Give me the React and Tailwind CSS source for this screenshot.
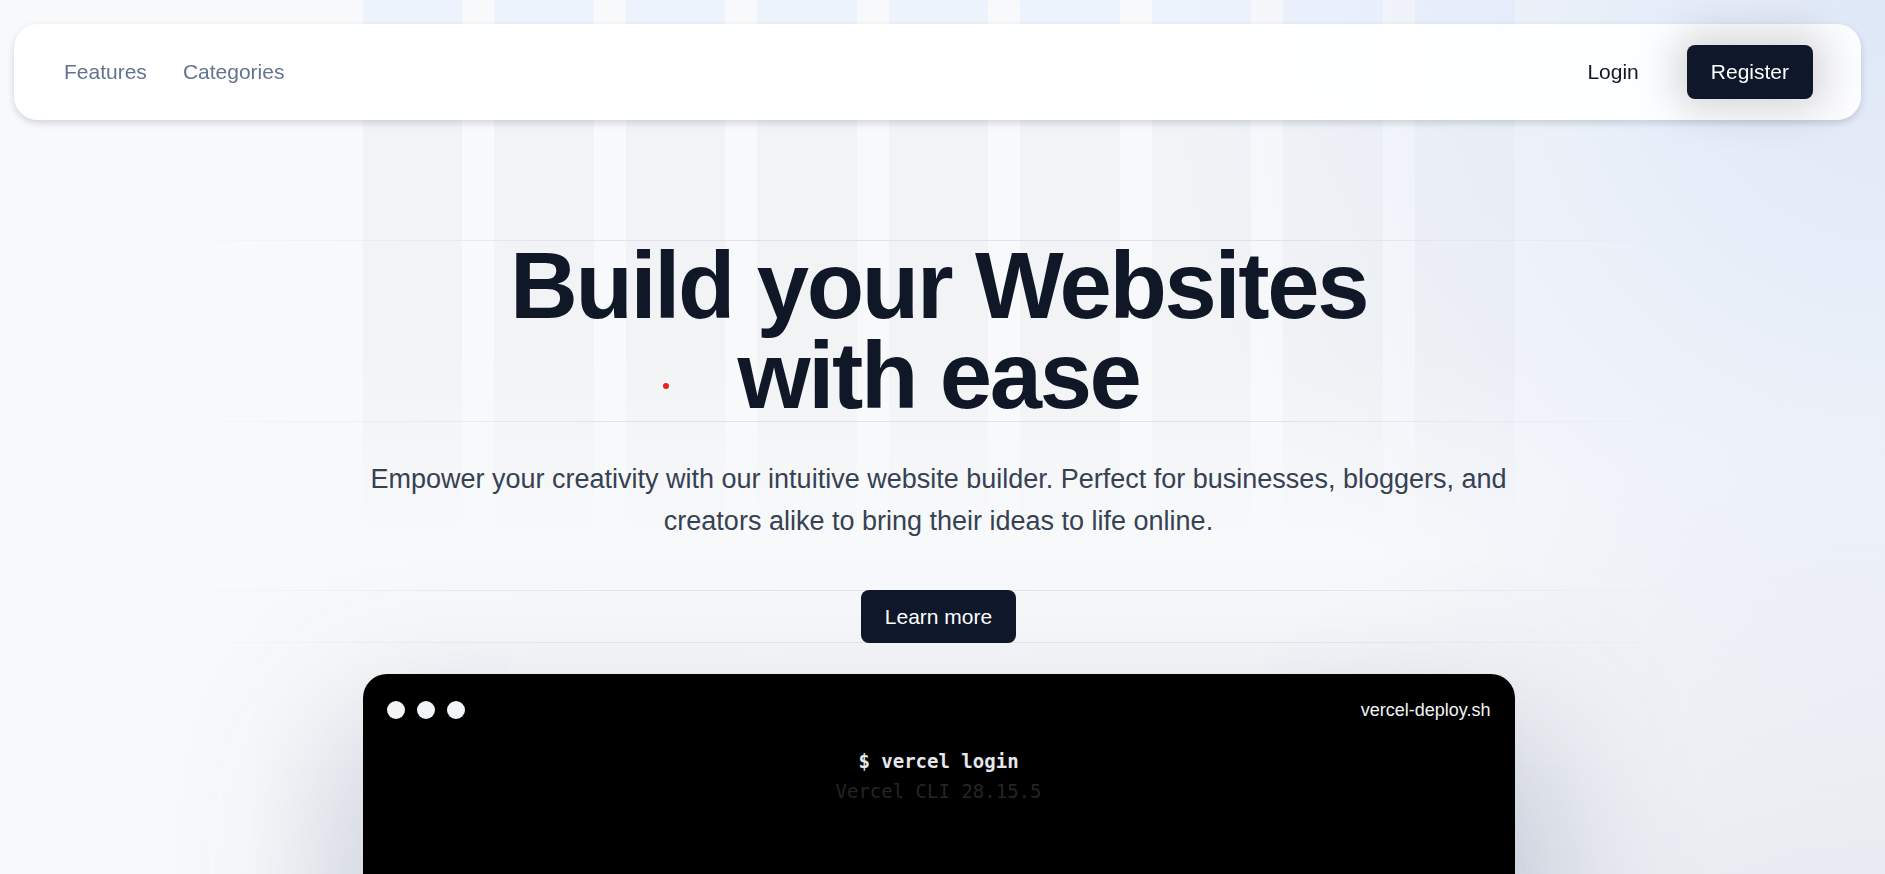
import React from 'react';

function FadeLine({ className = '' }) {
  return (
    <div
      className={`h-px w-full bg-[linear-gradient(to_right,transparent_8%,#dde2eb_35%,#dde2eb_68%,transparent_92%)] ${className}`}
    />
  );
}

function Backdrop() {
  const cols = Array.from({ length: 9 });
  return (
    <div className="pointer-events-none absolute inset-0">
      <div className="absolute inset-x-0 top-0 flex justify-center pr-2">
        <div className="grid h-[620px] w-[1152px] grid-cols-9 gap-8">
          {cols.map((_, i) => (
            <div
              key={i}
              className="bg-[linear-gradient(to_bottom,#edf3fd_0%,#f1f3f6_20%,#f2f3f5_58%,transparent_88%)]"
            />
          ))}
        </div>
      </div>
      <div className="absolute inset-0 bg-[radial-gradient(ellipse_38%_75%_at_100%_0%,rgba(214,226,246,0.75),transparent)]" />
      <div className="absolute inset-0 bg-[radial-gradient(ellipse_45%_60%_at_100%_100%,rgba(214,219,230,0.7),transparent)]" />
    </div>
  );
}

function Navbar() {
  return (
    <header className="pl-[14px] pr-[16px] pt-6">
      <nav className="flex h-24 items-center justify-between rounded-3xl bg-white/90 pl-[50px] pr-12 shadow-[0_3px_7px_rgba(15,23,42,0.16)] backdrop-blur">
        <div className="flex items-center gap-9 text-[21px] text-slate-500">
          <a href="#" className="hover:text-slate-700">Features</a>
          <a href="#" className="hover:text-slate-700">Categories</a>
        </div>
        <div className="flex items-center gap-12">
          <a href="#" className="text-[21px] text-gray-900">Login</a>
          <button className="h-[54px] rounded-lg bg-slate-900 px-6 text-[21px] text-white shadow-[0_0_40px_10px_rgba(0,0,0,0.17)]">
            Register
          </button>
        </div>
      </nav>
    </header>
  );
}

function Terminal() {
  return (
    <div className="mt-[31px] h-[420px] w-[1152px] rounded-3xl bg-black p-6 shadow-[0_70px_150px_20px_rgba(90,105,140,0.34)]">
      <div className="flex items-center justify-between">
        <div className="flex items-center gap-3">
          <span className="h-[18px] w-[18px] rounded-full bg-gray-100" />
          <span className="h-[18px] w-[18px] rounded-full bg-gray-100" />
          <span className="h-[18px] w-[18px] rounded-full bg-gray-100" />
        </div>
        <span className="text-[18px] leading-6 text-gray-100">vercel-deploy.sh</span>
      </div>
      <div className="mt-6 text-center font-['DejaVu_Sans_Mono',monospace] text-[19px] leading-[30px]">
        <div className="font-bold text-gray-200">$ vercel login</div>
        <div className="text-[#252525]">Vercel CLI 28.15.5</div>
      </div>
    </div>
  );
}

export default function App() {
  return (
    <div className="relative min-h-screen overflow-hidden bg-[#f8f9fb] font-['Liberation_Sans',Arial,sans-serif]">
      <Backdrop />
      <div className="relative pr-2">
        <Navbar />
        <main className="flex flex-col items-center pt-[120px]">
          <div className="w-full">
            <FadeLine />
            <h1 className="mx-auto max-w-[1000px] text-center text-[94px] font-bold leading-[90px] tracking-[-0.025em] text-gray-900">
              Build your Websites with ease
            </h1>
            <FadeLine />
          </div>
          <p className="mt-9 max-w-[1152px] text-center text-[27px] leading-[42px] text-gray-700">
            Empower your creativity with our intuitive website builder. Perfect for businesses, bloggers, and creators alike to bring their ideas to life online.
          </p>
          <div className="relative mt-12 flex w-full justify-center">
            <FadeLine className="absolute left-0 top-0" />
            <FadeLine className="absolute bottom-0 left-0" />
            <button className="relative h-[53px] rounded-lg bg-slate-900 px-6 text-[21px] text-white">
              Learn more
            </button>
          </div>
          <Terminal />
        </main>
      </div>
      <span className="absolute left-[663px] top-[383px] h-[6px] w-[6px] rounded-full bg-[#ee1d23]" />
    </div>
  );
}
